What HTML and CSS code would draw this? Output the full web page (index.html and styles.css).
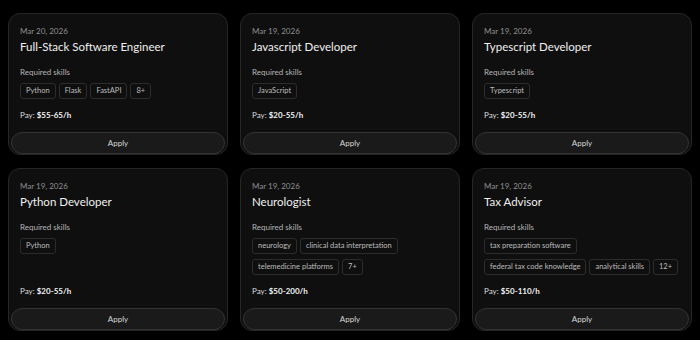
FILE: index.html
```html
<!DOCTYPE html>
<html>
<head>
<meta charset="utf-8">
<link rel="stylesheet" href="styles.css">
</head>
<body>
<div class="grid">
  <div class="card">
    <div class="body">
      <div class="date">Mar 20, 2026</div>
      <div class="title">Full-Stack Software Engineer</div>
      <div class="label">Required skills</div>
      <div class="chips"><span class="chip">Python</span><span class="chip">Flask</span><span class="chip">FastAPI</span><span class="chip">8+</span></div>
      <div class="pay">Pay: <b>$55-65/h</b></div>
    </div>
    <button class="apply">Apply</button>
  </div>
  <div class="card">
    <div class="body">
      <div class="date">Mar 19, 2026</div>
      <div class="title">Javascript Developer</div>
      <div class="label">Required skills</div>
      <div class="chips"><span class="chip">JavaScript</span></div>
      <div class="pay">Pay: <b>$20-55/h</b></div>
    </div>
    <button class="apply">Apply</button>
  </div>
  <div class="card">
    <div class="body">
      <div class="date">Mar 19, 2026</div>
      <div class="title">Typescript Developer</div>
      <div class="label">Required skills</div>
      <div class="chips"><span class="chip">Typescript</span></div>
      <div class="pay">Pay: <b>$20-55/h</b></div>
    </div>
    <button class="apply">Apply</button>
  </div>
  <div class="card">
    <div class="body">
      <div class="date">Mar 19, 2026</div>
      <div class="title">Python Developer</div>
      <div class="label">Required skills</div>
      <div class="chips"><span class="chip">Python</span></div>
      <div class="pay">Pay: <b>$20-55/h</b></div>
    </div>
    <button class="apply">Apply</button>
  </div>
  <div class="card">
    <div class="body">
      <div class="date">Mar 19, 2026</div>
      <div class="title">Neurologist</div>
      <div class="label">Required skills</div>
      <div class="chips"><span class="chip">neurology</span><span class="chip">clinical data interpretation</span><span class="chip">telemedicine platforms</span><span class="chip">7+</span></div>
      <div class="pay">Pay: <b>$50-200/h</b></div>
    </div>
    <button class="apply">Apply</button>
  </div>
  <div class="card">
    <div class="body">
      <div class="date">Mar 19, 2026</div>
      <div class="title">Tax Advisor</div>
      <div class="label">Required skills</div>
      <div class="chips"><span class="chip">tax preparation software</span><span class="chip">federal tax code knowledge</span><span class="chip">analytical skills</span><span class="chip">12+</span></div>
      <div class="pay">Pay: <b>$50-110/h</b></div>
    </div>
    <button class="apply">Apply</button>
  </div>
</div>
</body>
</html>
```
FILE: styles.css
```css
html, body {
  margin: 0;
  background: #000;
}
body {
  padding: 13px 8px 8px;
  font-family: "Lato", "Noto Sans", sans-serif;
  color: #e8e8e8;
}
.grid {
  display: grid;
  grid-template-columns: repeat(3, 220px);
  column-gap: 12px;
  row-gap: 13px;
}
.card {
  background: #0f0f0f;
  border: 1px solid #262626;
  border-radius: 12px;
  display: flex;
  flex-direction: column;
  padding: 0 2px;
}
.body {
  flex: 1;
  display: flex;
  flex-direction: column;
  padding: 12px 9px 0;
}
.date {
  font-size: 8px;
  line-height: 10px;
  color: #8f8f8f;
}
.title {
  font-size: 11.5px;
  line-height: 14px;
  color: #f0f0f0;
  margin-top: 4px;
}
.label {
  font-size: 8px;
  line-height: 10px;
  color: #b5b5b5;
  margin-top: 13px;
}
.chips {
  display: flex;
  flex-wrap: wrap;
  gap: 5px 3px;
  margin-top: 6px;
}
.chip {
  font-size: 7.5px;
  line-height: 14px;
  color: #bdbdbd;
  border: 1px solid #2c2c2c;
  border-radius: 3px;
  padding: 0 5px;
}
.pay {
  margin-top: auto;
  padding-top: 11px;
  font-size: 8px;
  line-height: 10px;
  color: #dcdcdc;
  margin-bottom: 12px;
}
.pay b {
  color: #f2f2f2;
  font-weight: 700;
}
.apply {
  display: block;
  width: 100%;
  height: 22px;
  background: #1a1a1a;
  border: 1px solid #333;
  border-radius: 11px;
  color: #d8d8d8;
  font-family: "Lato", "Noto Sans", sans-serif;
  font-size: 8px;
  cursor: pointer;
}
```
